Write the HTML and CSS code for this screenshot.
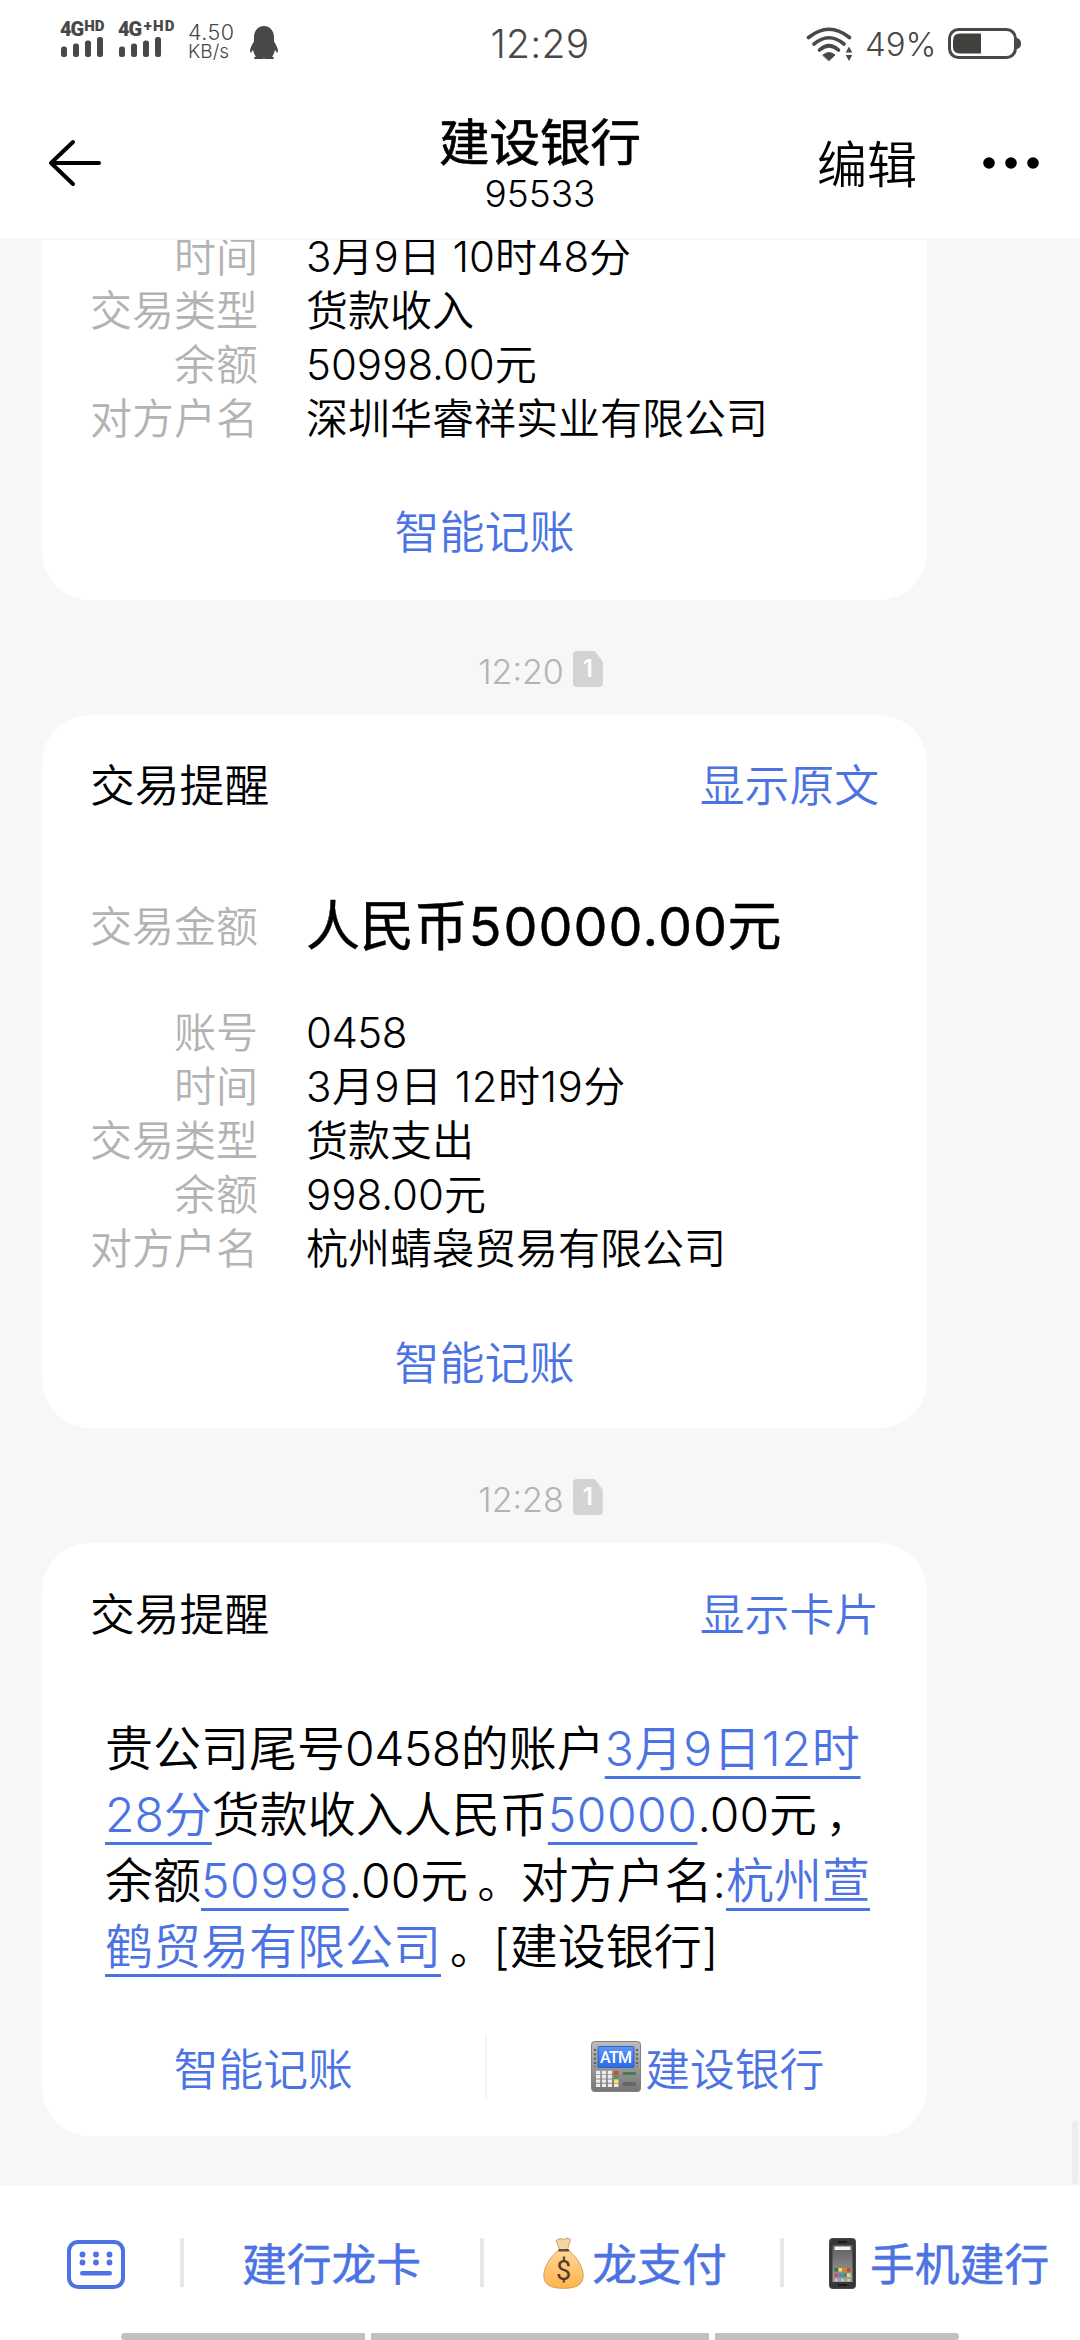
FILE: index.html
```html
<!DOCTYPE html>
<html lang="zh-CN">
<head>
<meta charset="utf-8">
<title>建设银行</title>
<link rel="stylesheet" href="styles.css">
</head>
<body>
<div class="screen">
  <header class="top">
    <div class="status">
      <div class="status-left">
        <div class="sim sim-a">
          <div class="net">4G<sup>HD</sup></div>
          <svg width="44" height="20" viewBox="0 0 44 20" fill="#484848"><rect x="1" y="9.500" width="6" height="10.500" rx="2.500"/><rect x="13" y="6.500" width="6" height="13.500" rx="2.500"/><rect x="25" y="3.500" width="6" height="16.500" rx="2.500"/><rect x="37" y="0" width="6" height="20" rx="2.500"/></svg>
        </div>
        <div class="sim sim-b">
          <div class="net">4G<sup class="plus">+HD</sup></div>
          <svg width="44" height="20" viewBox="0 0 44 20" fill="#484848"><rect x="1" y="9.500" width="6" height="10.500" rx="2.500"/><rect x="13" y="6.500" width="6" height="13.500" rx="2.500"/><rect x="25" y="3.500" width="6" height="16.500" rx="2.500"/><rect x="37" y="0" width="6" height="20" rx="2.500"/></svg>
        </div>
        <div class="speed"><span class="rate">4.50</span><span class="unit">KB/s</span></div>
        <svg class="penguin" width="28" height="34" viewBox="0 0 28 34" fill="#484848"><path d="M14 0C8.500 0 4 4.500 4 11v4.500C2.200 18.500 0 22 0 25c0 1.500.6 2 1.200 1.300L3 24c.4 2 1.400 4.800 2.800 6.600-1 .4-1.500.9-1.600 1.400V33h9l.8-.8.8.8h9v-1c-.1-.5-.6-1-1.600-1.400C23.600 28.800 24.600 26 25 24l1.800 2.300C27.400 27 28 26.500 28 25c0-3-2.200-6.500-4-9.500V11C24 4.500 19.500 0 14 0z"/></svg>
      </div>
      <div class="clock">12:29</div>
      <div class="status-right">
        <svg width="48" height="34" viewBox="0 0 48 34" fill="none" stroke="#484848" stroke-width="3.600" stroke-linecap="round"><path d="M2.500 10.500Q23 -6 43.500 10.500"/><path d="M8 17Q23 4.500 38 17"/><path d="M13.500 23Q23 14.500 32.500 23"/><path d="M17 28Q23 23 29 28L23 33.500z" fill="#484848" stroke-width="1"/><path d="M43 19.500l3.300 6h-6.600zM43 34l-3.300-6h6.600z" fill="#484848" stroke="none"/></svg>
        <span class="pct">49%</span>
        <svg width="73" height="32" viewBox="0 0 73 32"><rect x="1.500" y="1.500" width="66" height="28" rx="9" fill="none" stroke="#484848" stroke-width="3"/><path d="M12 5.500H33V25.500H12Q5 25.500 5 18.500V12.500Q5 5.500 12 5.500z" fill="#40403c"/><path d="M69 10q4 1 4 5.500t-4 5.500z" fill="#484848"/></svg>
      </div>
    </div>
    <div class="nav">
      <svg class="back" width="54" height="48" viewBox="0 0 54 48" fill="none" stroke="#000" stroke-width="4" stroke-linecap="round" stroke-linejoin="round"><path d="M51 24H3M25 3L3 24L25 45"/></svg>
      <div class="heading"><div class="name">建设银行</div><div class="number">95533</div></div>
      <div class="actions"><span>编辑</span>
        <svg width="58" height="14" viewBox="0 0 58 14"><circle cx="7" cy="7" r="5.800"/><circle cx="29" cy="7" r="5.800"/><circle cx="51" cy="7" r="5.800"/></svg>
      </div>
    </div>
  </header>

  <main class="thread">
    <section class="card card-first">
      <dl class="rows">
        <dt>时间</dt><dd>3月9日 10时48分</dd>
        <dt>交易类型</dt><dd>货款收入</dd>
        <dt>余额</dt><dd>50998.00元</dd>
        <dt>对方户名</dt><dd>深圳华睿祥实业有限公司</dd>
      </dl>
      <div class="link book">智能记账</div>
    </section>

    <div class="stamp"><span>12:20</span><span class="slot">1</span></div>

    <section class="card card-detail">
      <div class="card-head"><span>交易提醒</span><span class="link">显示原文</span></div>
      <dl class="rows total"><dt>交易金额</dt><dd class="amount">人民币50000.00元</dd></dl>
      <dl class="rows">
        <dt>账号</dt><dd class="account">0458</dd>
        <dt>时间</dt><dd class="date">3月9日 12时19分</dd>
        <dt>交易类型</dt><dd>货款支出</dd>
        <dt>余额</dt><dd>998.00元</dd>
        <dt>对方户名</dt><dd>杭州蜻袅贸易有限公司</dd>
      </dl>
      <div class="link book">智能记账</div>
    </section>

    <div class="stamp"><span>12:28</span><span class="slot">1</span></div>

    <section class="card card-text">
      <div class="card-head"><span>交易提醒</span><span class="link">显示卡片</span></div>
      <p class="message">贵公司尾号<span class="account">0458</span>的账户<a class="when">3月9日12时</a><br><a>28分</a>货款收入人民币<a class="sum">50000</a>.00元<span class="stop">，</span><br>余额<a class="sum">50998</a>.00元<span class="stop">。</span>对方户名:<a>杭州萱</a><br><a>鹤贸易有限公司</a><span class="stop">。</span>[建设银行]</p>
      <div class="choices">
        <div class="choice link">智能记账</div>
        <div class="choice link">
          <svg class="atm" width="50" height="51" viewBox="0 0 50 51"><defs><linearGradient id="steel" x2="0" y2="1"><stop stop-color="#bdbdbd"/><stop offset="1" stop-color="#757575"/></linearGradient><linearGradient id="blue" x2="0" y2="1"><stop stop-color="#5c97f8"/><stop offset="1" stop-color="#2b6ae8"/></linearGradient></defs><rect x=".5" y=".5" width="49" height="50" rx="3" fill="url(#steel)" stroke="#808080"/><rect x="7" y="5.500" width="36" height="21" rx="1" fill="url(#blue)" stroke="#2c62c4"/><text x="25" y="22" text-anchor="middle" fill="#fff" font-family="Roboto, sans-serif" font-size="16" font-weight="500" textLength="32">ATM</text><path d="M4 8v18M46 8v18" stroke="#555" stroke-width="2" stroke-dasharray="1.800 2.600"/><path d="M5 31.500h16M5 35.800h16M5 40.100h16M5 44.400h16" stroke="#ededed" stroke-width="3.400" stroke-dasharray="4.200 1.700"/><path d="M23 30h4.500v3.800H23z" fill="#e0403a"/><path d="M23 34.200h4.500V38H23z" fill="#4b9a50"/><path d="M23 38.400h4.500v3.800H23z" fill="#f6e558"/><path d="M23 42.600h4.500v3.400H23z" fill="#e6e6e6"/><path d="M32 31h13v3H32z" fill="#41804b"/><path d="M32 41h13v4H32z" fill="#666"/></svg>
          <span>建设银行</span>
        </div>
      </div>
    </section>
    <div class="scroll-thumb"></div>
  </main>

  <footer class="menu">
    <div class="keyboard"><svg width="58" height="49" viewBox="0 0 58 49" fill="#4c73e3"><rect x="2" y="2" width="54" height="45" rx="9" fill="none" stroke="#4c73e3" stroke-width="4"/><circle cx="15.500" cy="14.500" r="2.900"/><circle cx="29" cy="14.500" r="2.900"/><circle cx="42.500" cy="14.500" r="2.900"/><circle cx="15.500" cy="22.500" r="2.900"/><circle cx="29" cy="22.500" r="2.900"/><circle cx="42.500" cy="22.500" r="2.900"/><rect x="13" y="31" width="32" height="4.500" rx="2.200"/></svg></div>
    <div class="item item-card"><span>建行龙卡</span></div>
    <div class="item item-pay">
      <svg class="bag" width="41" height="52" viewBox="0 0 41 52"><defs><linearGradient id="gold" x2="0" y2="1"><stop stop-color="#ffd596"/><stop offset="1" stop-color="#fdb54b"/></linearGradient></defs><path d="M15.500 13.500C9 18 .8 29 .8 38.500.8 48 8 51.300 20.500 51.300S40.200 48 40.200 38.500C40.200 29 32 18 25.500 13.500z" fill="url(#gold)" stroke="#d79d59"/><path d="M16.500 12.500L13 3.500l4-2 3.500 1 3.500-1.500 3.500 1.500-3 10z" fill="#f5d5a2" stroke="#cda066"/><path d="M16.500 13.300h8.500" stroke="#6a4a3c" stroke-width="2.500" stroke-linecap="round"/><text x="20.500" y="42.500" text-anchor="middle" font-family="Roboto, sans-serif" font-size="27" font-weight="400" fill="#543930">$</text></svg>
      <span>龙支付</span>
    </div>
    <div class="item item-last">
      <svg class="phone" width="27" height="51" viewBox="0 0 27 51"><defs><linearGradient id="glass" x2="0" y2="1"><stop stop-color="#5c5c5c"/><stop offset="1" stop-color="#a2a2a2"/></linearGradient></defs><rect x=".5" y=".5" width="26" height="50" rx="3" fill="#373737" stroke="#484848"/><path d="M9 4h9M9 47h9" stroke="#111" stroke-width="1.500"/><rect x="3.500" y="7" width="20" height="37" fill="url(#glass)"/><rect x="5.500" y="8.500" width="16" height="3.500" fill="#f5f5f5"/><path d="M5.500 30h3.500v3.500H5.500z" fill="#2e7d46"/><path d="M9.500 30h3.500v3.500H9.500z" fill="#f5df52"/><path d="M13.500 30h4v3.500h-4z" fill="#ef7f1a"/><path d="M18 30h3.500v3.500H18z" fill="#b84a3c"/><path d="M5.500 35.500h3.500V39H5.500z" fill="#cf5148"/><path d="M9.500 35.500h3.500V39H9.500z" fill="#4a83d8"/><path d="M13.500 35.500h4V39h-4z" fill="#3d9a50"/><path d="M18 35.500h3.500V39H18z" fill="#f0da60"/><path d="M6.500 42h2M12.500 42h2M18.500 42h2" stroke="#ddd" stroke-width="2"/></svg>
      <span>手机建行</span>
    </div>
    <div class="home-hints"><i></i><i></i><i></i></div>
  </footer>
</div>
</body>
</html>
```
FILE: styles.css
```css
* { box-sizing: border-box; }
body { margin: 0; font-family: Inter, "Noto Sans CJK SC", sans-serif; font-weight: 350; color: #000; background: #f7f7f7; }
svg { display: block; flex: none; }
.screen { width: 1080px; height: 2340px; display: flex; flex-direction: column; overflow: hidden; }

.top { height: 238px; flex: none; background: #fff; }
.status { height: 84px; display: grid; grid-template-columns: 400px 280px 400px; color: #484848; }
.status-left { display: flex; padding: 20px 0 0 60px; }
.sim { height: 38px; }
.sim-a { width: 58px; }
.sim-b { width: 69px; }
.net { height: 17px; line-height: 19px; font-family: Roboto, sans-serif; font-weight: 900; font-size: 20px; letter-spacing: -1px; white-space: nowrap; display: flex; }
.net sup { margin-left: 1px; font-size: 15px; line-height: 13px; letter-spacing: 0; }
.net .plus { margin-left: 2.5px; letter-spacing: 1.2px; }
.speed { width: 63px; padding: 3px 0 0 1px; display: flex; flex-direction: column; line-height: 19px; }
.rate { font-size: 21.500px; letter-spacing: .5px; }
.unit { font-size: 19px; }
.penguin { margin-top: 6px; }
.clock { text-align: center; font-size: 39px; line-height: 87px; letter-spacing: .3px; }
.status-right { display: flex; align-items: center; padding: 0 59px 0 126px; }
.pct { font-size: 33px; margin: 1px 11px 0 11px; }

.nav { height: 154px; display: grid; grid-template-columns: 380px 320px 380px; }
.back { margin: 55px 0 0 48px; }
.heading { text-align: center; padding-top: 30px; }
.name { font-size: 50.500px; line-height: 58px; font-weight: 400; -webkit-text-stroke: .7px; }
.number { font-size: 37px; line-height: 44px; }
.actions { display: flex; align-items: center; justify-content: space-between; height: 158px; padding: 0 40px 0 117px; font-size: 50px; }
.actions span { padding-bottom: 5px; }

.thread { flex: 1; min-height: 0; position: relative; padding: 2px 0 0 42px; }
.card { width: 885px; padding: 0 48px; background: #fff; border-radius: 48px; }
.card-first { height: 360px; border-radius: 0 0 48px 48px; overflow: hidden; }
.card-first .rows { margin-top: -10px; }
.rows { margin: 0; display: grid; grid-template-columns: 168px 1fr; column-gap: 48px; grid-auto-rows: 54.100px; line-height: 54px; font-size: 42px; white-space: nowrap; }
.rows dt { text-align: right; color: #b3b3b3; }
.rows dd { margin: 0; }
.account { letter-spacing: -.5px; }
.date { letter-spacing: .45px; }
.link { color: #4c73e3; }
.book { text-align: center; font-size: 45px; line-height: 60px; margin-top: 57px; }
.stamp { width: 997px; height: 115px; display: flex; justify-content: center; padding-top: 51px; gap: 9px; color: #b3b3b3; font-size: 34px; line-height: 42px; }
.slot { width: 30px; height: 36px; border-radius: 4px; background: #d3d3d3; clip-path: polygon(0 0, 73% 0, 100% 30%, 100% 100%, 0 100%); color: #fff; font-size: 24px; font-weight: 600; line-height: 36px; text-align: center; }
.card-detail { height: 713px; padding-top: 41px; }
.card-head { display: flex; justify-content: space-between; font-size: 44.800px; line-height: 60px; }
.total { margin: 84px 0 52px; }
.amount { font-size: 54px; font-weight: 400; font-variant-numeric: tabular-nums; -webkit-text-stroke: .5px; }
.card-text { height: 593px; padding-top: 42px; }
.message { margin: 71px 0 0; padding-left: 15px; font-size: 48px; line-height: 66px; white-space: nowrap; }
.message a { color: #4c73e3; text-decoration: underline; text-decoration-thickness: 3px; text-underline-offset: 10px; text-decoration-skip-ink: none; }
.message .when { letter-spacing: .8px; }
.message .sum { letter-spacing: .5px; }
.stop { margin-left: 9px; font-size: 43px; line-height: 1; }
.choices { display: grid; grid-template-columns: 1fr 1fr; margin: 54px -48px 0; height: 62px; font-size: 44.800px; }
.choice { display: flex; align-items: center; justify-content: center; gap: 4px; }
.choice + .choice { border-left: 2px solid #f5f5f5; padding-left: 2px; }
.scroll-thumb { position: absolute; right: 2px; bottom: 2px; width: 6px; height: 63px; border-radius: 3px; background: #ededed; }

.menu { height: 154px; flex: none; background: #fff; position: relative; display: grid; grid-template-columns: 180px 300px 300px 300px; color: #4c73e3; font-size: 44.800px; font-weight: 400; -webkit-text-stroke: .5px; }
.menu svg { -webkit-text-stroke: 0; }
.keyboard { padding: 54px 0 0 67px; }
.item { height: 154px; display: flex; align-items: center; justify-content: center; gap: 8px; background: linear-gradient(#e8e8e8, #e8e8e8) 0 52px / 4px 49px no-repeat; }
.item span { padding-bottom: 4px; }
.item-card { padding-left: 3px; }
.item-pay { padding-left: 10px; }
.item-last { justify-content: flex-start; padding-left: 49px; gap: 14px; white-space: nowrap; }
.home-hints { position: absolute; left: 121px; bottom: 0; width: 838px; height: 7px; display: grid; grid-template-columns: 244px 338px 244px; gap: 6px; }
.home-hints i { background: #c1c1c1; }
.home-hints i:first-child { border-radius: 4px 0 0 4px; }
.home-hints i:last-child { border-radius: 0 4px 4px 0; }
```
